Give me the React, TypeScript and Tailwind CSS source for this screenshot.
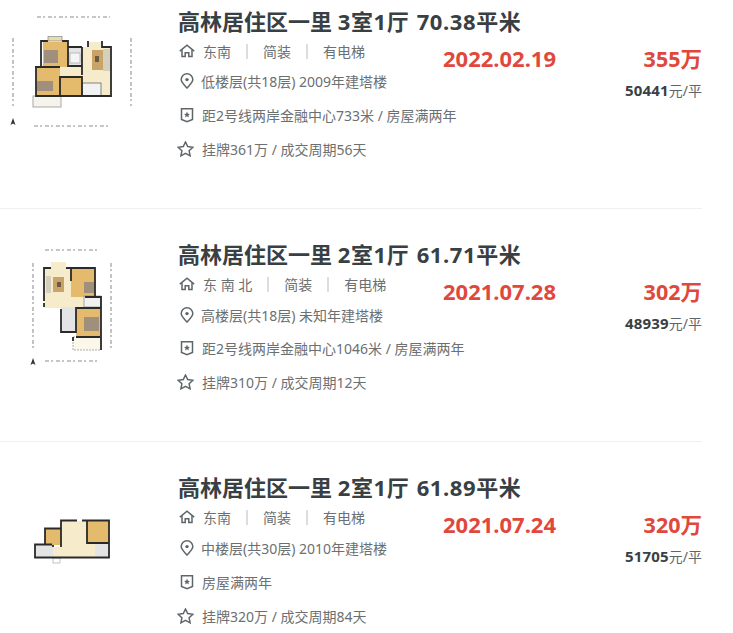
import React from "react";

const font = { fontFamily: '"Noto Sans","Noto Sans CJK SC",sans-serif' };
const IC = "#5f6669";

function HouseIcon() {
  return (
    <svg width="16" height="16" viewBox="0 0 16 16" fill="none" stroke={IC} strokeWidth="1.5" className="shrink-0">
      <path d="M0.8 8.2 L8 2.2 L15.2 8.2" />
      <path d="M3 6.8 V13.5 H6.2 V9.8 H9.8 V13.5 H13 V6.8" />
    </svg>
  );
}
function PinIcon() {
  return (
    <svg width="16" height="16" viewBox="0 0 16 16" fill="none" stroke={IC} strokeWidth="1.5" className="shrink-0">
      <path d="M8 15 C5.4 12 2.2 9.6 2.2 6.6 A5.8 5.8 0 0 1 13.8 6.6 C13.8 9.6 10.6 12 8 15 Z" />
      <circle cx="8" cy="6.6" r="1.7" fill={IC} stroke="none" />
    </svg>
  );
}
function ShieldIcon() {
  return (
    <svg width="16" height="16" viewBox="0 0 16 16" fill="none" stroke={IC} strokeWidth="1.5" className="shrink-0">
      <path d="M2.5 1.8 H13.5 V12.4 L8 14.8 L2.5 12.4 Z" />
      <path d="M8 4.6 L8.9 6.7 L11 6.9 L9.4 8.3 L9.9 10.4 L8 9.3 L6.1 10.4 L6.6 8.3 L5 6.9 L7.1 6.7 Z" fill={IC} stroke="none" />
    </svg>
  );
}
function StarIcon() {
  return (
    <svg width="17" height="16" viewBox="0 0 17 16" fill="none" stroke={IC} strokeWidth="1.5" className="ml-[-2px] shrink-0">
      <path d="M8.5 1 L10.7 5.6 L15.9 6.3 L12.1 9.8 L13.1 14.8 L8.5 12.4 L3.9 14.8 L4.9 9.8 L1.1 6.3 L6.3 5.6 Z" />
    </svg>
  );
}

function Dim({ x1, y1, x2, y2 }: { x1: number; y1: number; x2: number; y2: number }) {
  return <line x1={x1} y1={y1} x2={x2} y2={y2} stroke="#b4b4b4" strokeWidth="1.6" strokeDasharray="4 2 2 3" />;
}

function North({ x, y }: { x: number; y: number }) {
  return <path d={`M${x} ${y} L${x + 2.5} ${y + 7} L${x} ${y + 5.5} L${x - 2.5} ${y + 7} Z`} fill="#333" />;
}

const W = "#2a2a2a";
const O = "#e4bb6c";
const B = "#f6ebca";
const G = "#e4e4e4";

function PlanOne() {
  return (
    <svg width="150" height="140" viewBox="0 0 150 140" className="shrink-0 blur-[0.6px]">
      <Dim x1={37} y1={17} x2={110} y2={17} />
      <Dim x1={34} y1={126} x2={110} y2={126} />
      <Dim x1={13} y1={38} x2={13} y2={106} />
      <Dim x1={131} y1={38} x2={131} y2={106} />
      <North x={13} y={118} />
      <rect x="33" y="96" width="28" height="11" fill="#f6f4ea" stroke="#a9a9a9" />
      <rect x="43" y="42" width="25" height="25" fill={O} />
      <rect x="36" y="67" width="24" height="29" fill={O} />
      <rect x="60" y="76" width="22" height="20" fill={O} />
      <rect x="60" y="67" width="22" height="9" fill={B} />
      <rect x="68" y="47" width="14" height="20" fill={G} />
      <path d="M82 47 H88 V42 H102 V47 H111 V96 H82 Z" fill={B} />
      <rect x="82" y="83" width="19" height="13" fill="#f2f2f2" stroke="#666" strokeWidth="0.8" />
      <rect x="92" y="50" width="11" height="20" fill="#c8a468" />
      <rect x="95" y="56" width="4" height="6" fill="#6d5a44" />
      <rect x="103" y="49" width="7" height="22" fill="#d5d0bd" />
      <rect x="44" y="50" width="14" height="13" fill="#a08f7c" />
      <rect x="37" y="81" width="16" height="10" fill="#a08f7c" />
      <rect x="70" y="53" width="10" height="10" fill="#f5f5f5" stroke="#999" strokeWidth="0.6" />
      <path d="M48 41 H41 V67 M35 67 H60 M36 67 V96 H82 M60 96 V77 H82 V96 M62 41 H68 V47 H82 M68 47 V66 H82 M82 47 V75 M88 47 V41 M102 41 V47 H111 V96 H82" fill="none" stroke={W} strokeWidth="1.8" />
      <rect x="48" y="36.5" width="14" height="4.5" fill="#e8dcb4" stroke="#777" strokeWidth="0.6" />
    </svg>
  );
}

function PlanTwo() {
  return (
    <svg width="150" height="140" viewBox="0 0 150 140" className="shrink-0 blur-[0.6px]">
      <Dim x1={45} y1={17} x2={100} y2={17} />
      <Dim x1={45} y1={128} x2={100} y2={128} />
      <Dim x1={33} y1={30} x2={33} y2={115} />
      <Dim x1={111} y1={30} x2={111} y2={115} />
      <North x={33} y={125} />
      <path d="M44 35 H51 V29 H66 V35 H71 V64 H85 V75 H44 Z" fill={B} />
      <rect x="71" y="35" width="24" height="29" fill={O} />
      <rect x="84" y="63" width="17" height="11" fill="#f1f1f1" stroke="#777" strokeWidth="0.6" />
      <rect x="61" y="74" width="15" height="25" fill={G} />
      <rect x="76" y="74" width="25" height="30" fill={O} />
      <rect x="73" y="104" width="28" height="13" fill="#fbf8ea" stroke="#999" strokeDasharray="2 1" strokeWidth="0.8" />
      <rect x="53" y="44" width="11" height="15" fill="#c8a468" />
      <rect x="57" y="49" width="4" height="5" fill="#6d5a44" />
      <rect x="46" y="43" width="5" height="17" fill="#d5d0bd" />
      <rect x="84" y="49" width="10" height="11" fill="#a08f7c" />
      <rect x="84" y="84" width="15" height="14" fill="#a08f7c" />
      <path d="M51 35 H44 V68 M44 70 V74 M66 35 H95 V64 M71 35 V48 M85 64 H101 V117 M61 76 V99 H76 V75 H101 M76 104 H100 M73 104 V108" fill="none" stroke={W} strokeWidth="1.8" />
    </svg>
  );
}

function PlanThree() {
  return (
    <svg width="150" height="140" viewBox="0 0 150 140" className="shrink-0 blur-[0.6px]">
      <rect x="35" y="45" width="18" height="12" fill={G} />
      <rect x="45" y="29" width="16" height="16" fill={O} />
      <rect x="61" y="21" width="26" height="36" fill={B} />
      <rect x="87" y="21" width="22" height="22" fill={O} />
      <rect x="95" y="43" width="14" height="14" fill={G} />
      <rect x="87" y="43" width="8" height="14" fill={B} />
      <rect x="53" y="47" width="8" height="10" fill={B} />
      <rect x="53" y="58" width="7" height="5" fill="#fff" stroke="#aaa" strokeWidth="0.7" />
      <path d="M52 44.5 H35 V57.5 H109 V20.5 H87 M61 28 V20.5 H77 M82 20.5 H87 V43 H109 M45 44 V28.5 H61 V47 M53 45 V47" fill="none" stroke={W} strokeWidth="1.8" />
    </svg>
  );
}

type Item = {
  name: string;
  spec: string;
  dir: string;
  info: string;
  tag: string;
  deal: string;
  date: string;
  price: string;
  unit: string;
  plan: React.ReactNode;
  planTop: string;
  line2: string;
  line3: string;
};

const items: Item[] = [
  {
    name: "高林居住区一里",
    spec: "3室1厅 70.38平米",
    dir: "东南",
    info: "低楼层(共18层) 2009年建塔楼",
    tag: "距2号线两岸金融中心733米 / 房屋满两年",
    deal: "挂牌361万 / 成交周期56天",
    date: "2022.02.19",
    price: "355",
    unit: "50441",
    plan: <PlanOne />,
    planTop: "mt-[24px]",
    line2: "mt-0",
    line3: "mt-[4px]",
  },
  {
    name: "高林居住区一里",
    spec: "2室1厅 61.71平米",
    dir: "东 南 北",
    info: "高楼层(共18层) 未知年建塔楼",
    tag: "距2号线两岸金融中心1046米 / 房屋满两年",
    deal: "挂牌310万 / 成交周期12天",
    date: "2021.07.28",
    price: "302",
    unit: "48939",
    plan: <PlanTwo />,
    planTop: "mt-[24px]",
    line2: "mt-[1px]",
    line3: "mt-[3px]",
  },
  {
    name: "高林居住区一里",
    spec: "2室1厅 61.89平米",
    dir: "东南",
    info: "中楼层(共30层) 2010年建塔楼",
    tag: "房屋满两年",
    deal: "挂牌320万 / 成交周期84天",
    date: "2021.07.24",
    price: "320",
    unit: "51705",
    plan: <PlanThree />,
    planTop: "mt-[58px]",
    line2: "mt-[1px]",
    line3: "mt-[4px]",
  },
];

function Row({ item }: { item: Item }) {
  return (
    <div className="flex h-[233px] border-b border-[#f0f0f0]">
      <div className="w-[179px] shrink-0">
        <div className={item.planTop}>{item.plan}</div>
      </div>
      <div className="min-w-0 flex-1 pt-[30px]">
        <div className="ml-[-1px] h-[31px] whitespace-nowrap text-[22px] font-bold leading-[30px] text-[#394043]">
          {item.name} <span className="tracking-[0.6px] [word-spacing:1px]">{item.spec}</span>
        </div>
        <div className="flex">
          <div className="w-[264px] shrink-0 text-[14px] text-[#6b7072]">
            <div className="mt-[-1px] flex h-[30px] items-center whitespace-nowrap">
              <HouseIcon />
              <span className="ml-[8px]">{item.dir}</span>
              <span className="mx-[15px] h-[15px] w-[2px] bg-[#dddddd]" />
              <span>简装</span>
              <span className="mx-[15px] h-[15px] w-[2px] bg-[#dddddd]" />
              <span>有电梯</span>
            </div>
            <div className={`flex h-[30px] items-center gap-[6px] whitespace-nowrap ${item.line2}`}>
              <PinIcon />
              <span>{item.info}</span>
            </div>
            <div className={`flex h-[30px] items-center gap-[7px] whitespace-nowrap ${item.line3}`}>
              <ShieldIcon />
              <span>{item.tag}</span>
            </div>
            <div className="mt-[4px] flex h-[30px] items-center gap-[8px] whitespace-nowrap">
              <StarIcon />
              <span>{item.deal}</span>
            </div>
          </div>
          <div className="flex-1 pt-[6px] text-[22px] font-bold leading-[30px] text-[#e1483d]">
            {item.date}
          </div>
          <div className="flex w-[90px] flex-col items-end pt-[7px]">
            <div className="whitespace-nowrap text-[21.5px] font-bold leading-[30px] text-[#e1483d]">
              {item.price}万
            </div>
            <div className="mt-[6px] whitespace-nowrap text-[14px] leading-[20px] text-[#5f6669]">
              <span className="text-[15px] font-bold tracking-[0.2px] text-[#394043]">{item.unit}</span>元/平
            </div>
          </div>
        </div>
      </div>
    </div>
  );
}

export default function App() {
  return (
    <div className="h-[633px] w-[733px] overflow-hidden bg-white" style={font}>
      <div className="mt-[-24px] w-[702px]">
        {items.map((item) => (
          <Row key={item.name + item.spec} item={item} />
        ))}
      </div>
    </div>
  );
}
